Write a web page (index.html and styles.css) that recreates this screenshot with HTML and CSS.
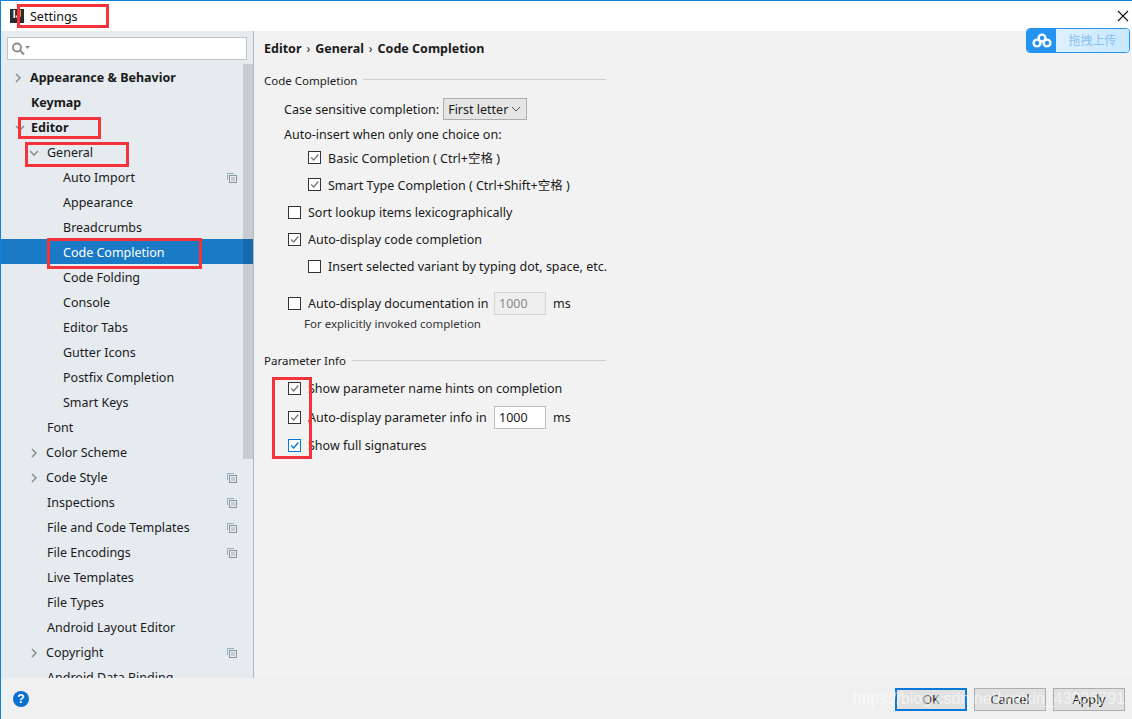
FILE: index.html
```html
<!DOCTYPE html>
<html lang="zh">
<head>
  <meta charset="UTF-8" />
  <title>Settings</title>
  <link rel="stylesheet" href="styles.css">
</head>
<body>
  <svg class="defs" width="0" height="0">
    <symbol id="copy" viewBox="0 0 10 10">
      <path d="M0.5 7V0.5H7" fill="none" stroke="#8fb0c4"/>
      <rect x="2.5" y="2.5" width="7" height="7" fill="#e6ebf0" stroke="#8b9298"/>
      <path d="M4 5H8M4 7H8" stroke="#a5acb2"/>
    </symbol>
    <symbol id="tick" viewBox="0 0 13 13">
      <path d="M2.5 6.5L5.5 9.5L11 3" fill="none" stroke="currentColor" stroke-width="1.6"/>
    </symbol>
  </svg>

  <div class="window">
    <header class="titlebar">
      <span class="app-icon">IJ</span>
      <span class="app-title">Settings</span>
      <svg class="close" width="12" height="12" viewBox="0 0 12 12">
        <path d="M1 1L11 11M11 1L1 11" stroke="#111" stroke-width="1.1"/>
      </svg>
    </header>

    <div class="content">
      <aside class="sidebar">
        <div class="search">
          <svg width="20" height="14" viewBox="0 0 20 14">
            <circle cx="6" cy="5.5" r="4" fill="none" stroke="#8a8a8a" stroke-width="1.8"/>
            <path d="M9 8.5L13 12.5" stroke="#8a8a8a" stroke-width="2"/>
            <path d="M14 4H19L16.5 7Z" fill="#8a8a8a"/>
          </svg>
        </div>
        <div class="tree">
          <div class="row top"><svg class="arrow" width="6" height="10" viewBox="0 0 6 10"><path d="M1 1L5 5L1 9" fill="none" stroke="#8c8c8c" stroke-width="1.5"/></svg><b>Appearance &amp; Behavior</b></div>
          <div class="row top plain"><b>Keymap</b></div>
          <div class="row top open"><svg class="arrow" width="10" height="6" viewBox="0 0 10 6"><path d="M1 1L5 5L9 1" fill="none" stroke="#8c8c8c" stroke-width="1.5"/></svg><b>Editor</b></div>
          <div class="row sub open"><svg class="arrow" width="10" height="6" viewBox="0 0 10 6"><path d="M1 1L5 5L9 1" fill="none" stroke="#8c8c8c" stroke-width="1.5"/></svg><span>General</span></div>
          <div class="row leaf"><span>Auto Import</span><svg class="copy"><use href="#copy"/></svg></div>
          <div class="row leaf"><span>Appearance</span></div>
          <div class="row leaf"><span>Breadcrumbs</span></div>
          <div class="row leaf selected"><span>Code Completion</span></div>
          <div class="row leaf"><span>Code Folding</span></div>
          <div class="row leaf"><span>Console</span></div>
          <div class="row leaf"><span>Editor Tabs</span></div>
          <div class="row leaf"><span>Gutter Icons</span></div>
          <div class="row leaf"><span>Postfix Completion</span></div>
          <div class="row leaf"><span>Smart Keys</span></div>
          <div class="row item"><span>Font</span></div>
          <div class="row sub"><svg class="arrow" width="6" height="10" viewBox="0 0 6 10"><path d="M1 1L5 5L1 9" fill="none" stroke="#8c8c8c" stroke-width="1.5"/></svg><span>Color Scheme</span></div>
          <div class="row sub"><svg class="arrow" width="6" height="10" viewBox="0 0 6 10"><path d="M1 1L5 5L1 9" fill="none" stroke="#8c8c8c" stroke-width="1.5"/></svg><span>Code Style</span><svg class="copy"><use href="#copy"/></svg></div>
          <div class="row item"><span>Inspections</span><svg class="copy"><use href="#copy"/></svg></div>
          <div class="row item"><span>File and Code Templates</span><svg class="copy"><use href="#copy"/></svg></div>
          <div class="row item"><span>File Encodings</span><svg class="copy"><use href="#copy"/></svg></div>
          <div class="row item"><span>Live Templates</span></div>
          <div class="row item"><span>File Types</span></div>
          <div class="row item"><span>Android Layout Editor</span></div>
          <div class="row sub"><svg class="arrow" width="6" height="10" viewBox="0 0 6 10"><path d="M1 1L5 5L1 9" fill="none" stroke="#8c8c8c" stroke-width="1.5"/></svg><span>Copyright</span><svg class="copy"><use href="#copy"/></svg></div>
          <div class="row item"><span>Android Data Binding</span></div>
          <div class="thumb"></div>
        </div>
      </aside>

      <main class="panel">
        <div class="crumbs"><b>Editor</b><i>›</i><b>General</b><i>›</i><b>Code Completion</b></div>

        <div class="group-title first"><span>Code Completion</span></div>
        <div class="line lv1 combo-row">
          <span>Case sensitive completion:</span>
          <span class="combo">First letter
            <svg width="10" height="6" viewBox="0 0 10 6"><path d="M1 1L5 5L9 1" fill="none" stroke="#555"/></svg>
          </span>
        </div>
        <div class="line lv1 tight">Auto-insert when only one choice on:</div>
        <div class="line lv3 basic"><span class="check on"><svg><use href="#tick"/></svg></span>Basic Completion ( Ctrl+空格 )</div>
        <div class="line lv3"><span class="check on"><svg><use href="#tick"/></svg></span>Smart Type Completion ( Ctrl+Shift+空格 )</div>
        <div class="line lv2 sort"><span class="check"></span>Sort lookup items lexicographically</div>
        <div class="line lv2"><span class="check on"><svg><use href="#tick"/></svg></span>Auto-display code completion</div>
        <div class="line lv3"><span class="check"></span>Insert selected variant by typing dot, space, etc.</div>
        <div class="line lv2 spaced"><span class="check"></span><span class="label-fix">Auto-display documentation in</span><span class="num off">1000</span>ms</div>
        <div class="hint">For explicitly invoked completion</div>

        <div class="group-title second"><span>Parameter Info</span></div>
        <div class="line lv2 params"><span class="check on"><svg><use href="#tick"/></svg></span>Show parameter name hints on completion</div>
        <div class="line lv2 gap5"><span class="check on"><svg><use href="#tick"/></svg></span><span class="label-fix">Auto-display parameter info in</span><span class="num">1000</span>ms</div>
        <div class="line lv2 gap4"><span class="check focus"><svg><use href="#tick"/></svg></span>Show full signatures</div>
      </main>
    </div>

    <footer class="footer">
      <span class="help">?</span>
      <div class="buttons">
        <span class="btn default">OK</span>
        <span class="btn">Cancel</span>
        <span class="btn">Apply</span>
      </div>
    </footer>
  </div>

  <!-- red marks and overlays drawn on top of the screenshot -->
  <div class="mark m-title"></div>
  <div class="mark m-editor"></div>
  <div class="mark m-general"></div>
  <div class="mark m-code"></div>
  <div class="mark m-checks"></div>

  <div class="upload">
    <span class="upload-logo">
      <svg width="20" height="15" viewBox="0 0 20 15">
        <circle cx="10" cy="5" r="3.4" fill="none" stroke="#fff" stroke-width="2.4"/>
        <circle cx="5" cy="10" r="3.4" fill="none" stroke="#fff" stroke-width="2.4"/>
        <circle cx="15" cy="10" r="3.4" fill="none" stroke="#fff" stroke-width="2.4"/>
      </svg>
    </span>
    <span class="upload-text">拖拽上传</span>
  </div>

  <div class="watermark">https://blog.csdn.net/weixin_43926791</div>
</body>
</html>
```

FILE: styles.css
```css
* {
  box-sizing: border-box;
}

html, body {
  margin: 0;
  height: 719px;
  overflow: hidden;
}

body {
  position: relative;
  font-family: "Noto Sans", "Noto Sans CJK SC", sans-serif;
  font-size: 12.5px;
  color: #1a1a1a;
}

.defs {
  position: absolute;
}

.window {
  display: flex;
  flex-direction: column;
  height: 719px;
  border-top: 1px solid #0a84e0;
  border-left: 1px solid #0a84e0;
  background: #f2f2f2;
}

.titlebar {
  display: flex;
  align-items: center;
  height: 30px;
  padding-left: 9px;
  background: #fff;
}

.app-icon {
  width: 14px;
  height: 14px;
  background: #2b2b2b;
  color: #fff;
  font: bold 10px/11px "Liberation Sans", sans-serif;
  text-align: center;
}

.app-title {
  margin-left: 6px;
  color: #111;
}

.close {
  margin-left: auto;
  margin-right: 3px;
}

.content {
  display: flex;
  flex: 1;
  min-height: 0;
}

.sidebar {
  width: 253px;
  background: #e6ebf0;
  border-right: 1px solid #b4b8bc;
  overflow: hidden;
}

.search {
  display: flex;
  align-items: center;
  height: 23px;
  margin: 6px 6px 4px 6px;
  padding-left: 3px;
  background: #fff;
  border: 1px solid #c4c4c4;
}

.tree {
  position: relative;
}

.row {
  display: flex;
  align-items: center;
  height: 25px;
  padding-top: 2px;
  white-space: nowrap;
}

.row .copy {
  width: 10px;
  height: 10px;
  margin-left: auto;
  margin-right: 16px;
}

.row b {
  font-weight: 700;
}

.top {
  padding-left: 14px;
}

.top .arrow {
  margin-right: 9px;
}

.top.open .arrow {
  margin-right: 6px;
}

.top.plain {
  padding-left: 30px;
}

.sub {
  padding-left: 30px;
}

.sub .arrow {
  margin-right: 9px;
}

.sub.open {
  padding-left: 28px;
}

.sub.open .arrow {
  margin-right: 8px;
}

.item {
  padding-left: 46px;
}

.leaf {
  padding-left: 62px;
}

.selected {
  background: #1a7ac5;
  color: #fff;
}

.thumb {
  position: absolute;
  top: 0;
  right: 0;
  width: 10px;
  height: 395px;
  background: rgba(0, 0, 0, 0.13);
}

.panel {
  flex: 1;
  padding-left: 10px;
  background: #f2f2f2;
}

.crumbs {
  display: flex;
  align-items: center;
  height: 20px;
  margin-top: 7px;
}

.crumbs i {
  margin: 0 5px;
  font-style: normal;
  font-size: 12px;
}

.group-title {
  display: flex;
  align-items: center;
  width: 342px;
  height: 18px;
  font-size: 11.5px;
}

.group-title::after {
  content: "";
  flex: 1;
  height: 1px;
  margin: -1px 0 0 6px;
  background: #cfcfcf;
}

.group-title.first {
  margin-top: 13px;
}

.group-title.second {
  margin-top: 18px;
}

.group-title.second::after {
  margin-top: 0;
}

.line {
  display: flex;
  align-items: center;
  height: 24px;
  margin-top: 3px;
  white-space: nowrap;
}

.lv1 {
  padding-left: 20px;
}

.lv2 {
  padding-left: 24px;
}

.lv3 {
  padding-left: 44px;
}

.tight {
  margin-top: 0;
}

.basic {
  margin-top: -1px;
}

.sort {
  margin-top: 4px;
}

.combo-row {
  margin-top: 8px;
  margin-bottom: 1px;
}

.spaced {
  margin-top: 13px;
}

.params {
  margin-top: 7px;
}

.gap5 {
  margin-top: 5px;
}

.gap4 {
  margin-top: 4px;
}

.combo {
  display: flex;
  align-items: center;
  justify-content: space-between;
  width: 84px;
  height: 22px;
  margin-left: 4px;
  padding: 0 5px 0 4px;
  background: #e5e5e5;
  border: 1px solid #adadad;
}

.check {
  flex: none;
  width: 13px;
  height: 13px;
  margin-right: 7px;
  background: #fff;
  border: 1px solid #333;
  color: #777;
}

.check svg {
  display: block;
  width: 11px;
  height: 11px;
}

.check.focus {
  border-color: #0a78d7;
  color: #0a78d7;
}

.label-fix {
  width: 186px;
}

.num {
  width: 52px;
  height: 23px;
  margin-right: 7px;
  padding-left: 4px;
  line-height: 21px;
  background: #fff;
  border: 1px solid #bcbcbc;
}

.num.off {
  background: #efefef;
  border-color: #d2d2d2;
  color: #8a8a8a;
}

.hint {
  height: 18px;
  padding-left: 40px;
  font-size: 11.5px;
  color: #333;
  line-height: 18px;
}

.footer {
  display: flex;
  align-items: center;
  justify-content: space-between;
  height: 41px;
  padding: 0 7px 0 12px;
  background: #f0f0f0;
}

.help {
  width: 16px;
  height: 16px;
  border-radius: 50%;
  background: #0a6fd0;
  color: #fff;
  font: bold 12px/16px "Liberation Sans", sans-serif;
  text-align: center;
}

.buttons {
  display: flex;
  gap: 7px;
  margin-top: 1px;
}

.btn {
  width: 72px;
  height: 23px;
  background: #e1e1e1;
  border: 1px solid #adadad;
  line-height: 21px;
  text-align: center;
}

.btn.default {
  border: 2px solid #0a78d7;
  line-height: 19px;
}

.mark {
  position: absolute;
  border: 3px solid #f5333a;
}

.m-title {
  left: 17px;
  top: 4px;
  width: 92px;
  height: 24px;
}

.m-editor {
  left: 18px;
  top: 117px;
  width: 83px;
  height: 22px;
}

.m-general {
  left: 25px;
  top: 142px;
  width: 104px;
  height: 25px;
}

.m-code {
  left: 47px;
  top: 238px;
  width: 155px;
  height: 31px;
}

.m-checks {
  left: 272px;
  top: 377px;
  width: 40px;
  height: 82px;
}

.upload {
  position: absolute;
  left: 1026px;
  top: 28px;
  display: flex;
  width: 104px;
  height: 25px;
  border: 1px solid #2493f2;
  border-radius: 4px;
  overflow: hidden;
}

.upload-logo {
  display: flex;
  align-items: center;
  justify-content: center;
  width: 29px;
  background: #2493f2;
}

.upload-text {
  flex: 1;
  background: linear-gradient(90deg, #dff1ff, #c8e8ff);
  color: #87c1ee;
  font-size: 12px;
  line-height: 23px;
  text-align: center;
}

.watermark {
  position: absolute;
  right: 7px;
  top: 690px;
  color: rgba(255, 255, 255, 0.6);
  font: 16px "Liberation Sans", sans-serif;
  white-space: nowrap;
}
```
